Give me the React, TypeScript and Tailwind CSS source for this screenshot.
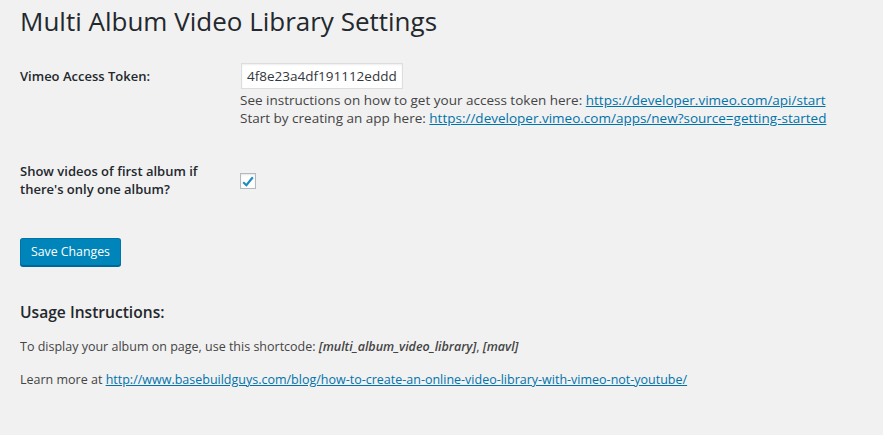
export default function App() {
  const font = { fontFamily: '"Open Sans", "Noto Sans", sans-serif' };
  return (
    <div className="min-h-[435px] w-full bg-[#f1f1f1] text-[12.5px] text-[#444]" style={font}>
      <div className="pl-5 pr-5">
        {/* Title */}
        <h1 className="pt-[5px] pb-[4px] text-[26px] leading-[32px] font-normal text-[#23282d]">
          Multi Album Video Library Settings
        </h1>

        {/* Settings table */}
        <div className="mt-[7px]">
          <div className="flex">
            <div className="w-[220px] shrink-0 pt-5 pr-[10px] text-[13px] leading-[17px] font-semibold text-[#23282d]">
              Vimeo Access Token:
            </div>
            <div className="pt-[15px] pb-[15px]">
              <input
                type="text"
                readOnly
                value="4f8e23a4df191112edddab9c0e4f2a17"
                className="ml-px h-[26px] w-[162px] border border-[#ddd] bg-white px-[5px] text-[13.5px] text-[#32373c] shadow-[inset_0_1px_2px_rgba(0,0,0,0.07)] outline-none"
                style={font}
              />
              <p className="mt-[2px] text-[13.5px] leading-[18px] text-[#444]">
                See instructions on how to get your access token here:{' '}
                <a href="#" className="text-[#0073aa] underline">https://developer.vimeo.com/api/start</a>
              </p>
              <p className="text-[13.5px] leading-[18px] text-[#444]">
                Start by creating an app here:{' '}
                <a href="#" className="text-[#0073aa] underline">
                  https://developer.vimeo.com/apps/new?source=getting-started
                </a>
              </p>
            </div>
          </div>

          <div className="flex">
            <div className="w-[220px] shrink-0 pt-5 pb-5 pr-[10px] text-[13px] leading-[18px] font-semibold text-[#23282d]">
              Show videos of first album if there's only one album?
            </div>
            <div className="pt-[31px]">
              <span className="flex h-4 w-4 items-center justify-center border border-[#b4b9be] bg-white shadow-[inset_0_1px_2px_rgba(0,0,0,0.1)]">
                <svg width="12" height="11" viewBox="0 0 12 11">
                  <path d="M1.2 6.2 L4.4 9.2 L10.8 1.2" fill="none" stroke="#1e8cbe" strokeWidth="2.2" strokeLinejoin="miter" />
                </svg>
              </span>
            </div>
          </div>
        </div>

        {/* Submit */}
        <div className="mt-5">
          <button className="h-[28px] rounded-[3px] border border-[#0073aa] border-b-[#006799] bg-[#0085ba] px-[10px] text-[12.3px] leading-[26px] text-white shadow-[0_1px_0_#006799]" style={font}>
            Save Changes
          </button>
        </div>

        {/* Usage */}
        <h2 className="mt-[35px] text-[15.6px] leading-[22px] font-semibold text-[#23282d]">Usage Instructions:</h2>
        <p className="mt-[14px] leading-[20px]">
          To display your album on page, use this shortcode:{' '}
          <em className="font-semibold">[multi_album_video_library]</em>, <em className="font-semibold">[mavl]</em>
        </p>
        <p className="mt-[13px] leading-[20px]">
          Learn more at{' '}
          <a href="#" className="text-[#0073aa] underline">
            http://www.basebuildguys.com/blog/how-to-create-an-online-video-library-with-vimeo-not-youtube/
          </a>
        </p>
      </div>
    </div>
  );
}
